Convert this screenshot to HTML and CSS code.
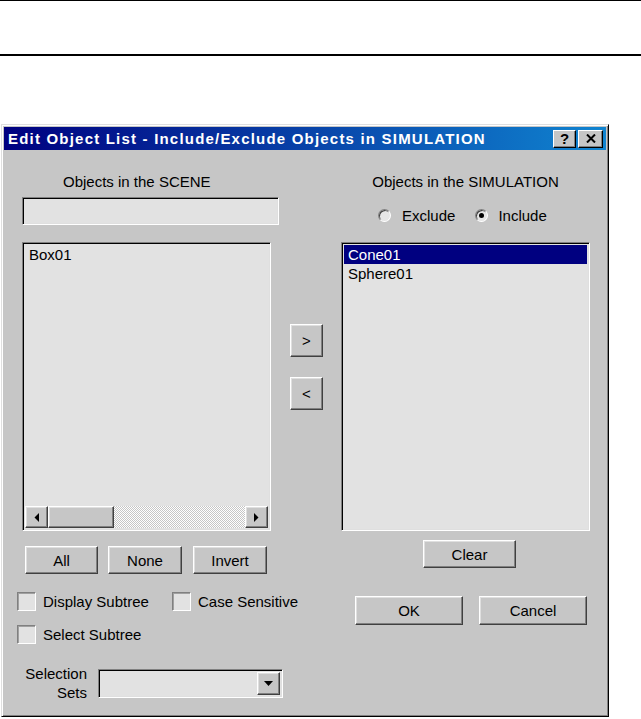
FILE: index.html
```html
<!DOCTYPE html>
<html lang="en">
<head>
    <meta name="viewport" content="width=device-width, initial-scale=1.0">
    <title>Edit Object List</title>
    <link rel="stylesheet" href="styles.css">
</head>
<body>
    <div class="page-head"></div>
    <div class="dialog">
        <div class="title-bar">
            <span class="title">Edit Object List - Include/Exclude Objects in SIMULATION</span>
            <div class="title-buttons">
                <span class="tb-btn tb-help">?</span>
                <span class="tb-btn">
                    <svg width="10" height="9" viewBox="0 0 10 9"><path d="M1 0.5 L9 8.5 M9 0.5 L1 8.5" stroke="#000" stroke-width="2" fill="none"/></svg>
                </span>
            </div>
        </div>
        <div class="dialog-body">
            <div class="col-left">
                <div class="label scene-label">Objects in the SCENE</div>
                <div class="sunken search"></div>
                <div class="sunken list list-left">
                    <div class="items">
                        <div class="item">Box01</div>
                    </div>
                    <div class="hscroll">
                        <span class="raised sb-btn">
                            <svg width="5" height="9" viewBox="0 0 5 9"><polygon points="5,0 5,9 0.5,4.5" fill="#000"/></svg>
                        </span>
                        <span class="raised sb-thumb"></span>
                        <span class="sb-track"></span>
                        <span class="raised sb-btn">
                            <svg width="5" height="9" viewBox="0 0 5 9"><polygon points="0,0 0,9 4.5,4.5" fill="#000"/></svg>
                        </span>
                    </div>
                </div>
                <div class="btn-row">
                    <button class="raised btn btn-all">All</button>
                    <button class="raised btn btn-none">None</button>
                    <button class="raised btn btn-invert">Invert</button>
                </div>
                <div class="check-row">
                    <label class="check check-first"><span class="box"></span>Display Subtree</label>
                    <label class="check"><span class="box"></span>Case Sensitive</label>
                </div>
                <div class="check-row check-row-2">
                    <label class="check"><span class="box"></span>Select Subtree</label>
                </div>
                <div class="sets-row">
                    <div class="sets-label">Selection<br>Sets</div>
                    <div class="sunken dropdown">
                        <span class="raised dd-btn">
                            <svg width="9" height="5" viewBox="0 0 9 5"><polygon points="0,0 9,0 4.5,5" fill="#000"/></svg>
                        </span>
                    </div>
                </div>
            </div>

            <div class="col-mid">
                <button class="raised btn arrow-btn">&gt;</button>
                <button class="raised btn arrow-btn arrow-back">&lt;</button>
            </div>

            <div class="col-right">
                <div class="label sim-label">Objects in the SIMULATION</div>
                <div class="radio-row">
                    <span class="radio"></span><span class="radio-text">Exclude</span>
                    <span class="radio checked"></span><span class="radio-text radio-text-2">Include</span>
                </div>
                <div class="sunken list list-right">
                    <div class="items">
                        <div class="item selected">Cone01</div>
                        <div class="item">Sphere01</div>
                    </div>
                </div>
                <button class="raised btn btn-clear">Clear</button>
                <div class="ok-row">
                    <button class="raised btn btn-ok">OK</button>
                    <button class="raised btn btn-cancel">Cancel</button>
                </div>
            </div>
        </div>
    </div>
</body>
</html>
```

FILE: styles.css
```css
body {
    margin: 0;
    background: #fff;
    font-family: "Liberation Sans", Arial, sans-serif;
    font-size: 15px;
    color: #000;
}
.page-head {
    height: 53px;
    border-top: 1px solid #000;
    border-bottom: 2px solid #000;
}
.dialog {
    box-sizing: border-box;
    width: 608px;
    height: 593px;
    margin: 68px 0 0 1px;
    padding: 2px;
    background: #c6c6c6;
    border: 1px solid;
    border-color: #dfdfdf #000 #000 #dfdfdf;
    box-shadow: inset 1px 1px #fff, inset -1px -1px #808080;
}
.title-bar {
    height: 23px;
    display: flex;
    align-items: center;
    justify-content: space-between;
    padding: 0 3px 0 4px;
    background: linear-gradient(to right, #000080, #1084d0);
}
.title {
    color: #fff;
    font-weight: bold;
    letter-spacing: 1.2px;
    white-space: nowrap;
}
.title-buttons {
    display: flex;
    gap: 2px;
}
.tb-btn {
    box-sizing: border-box;
    width: 25px;
    height: 18px;
    display: flex;
    align-items: center;
    justify-content: center;
    background: #c6c6c6;
    border: 1px solid;
    border-color: #fff #000 #000 #fff;
    box-shadow: inset -1px -1px #808080;
    font-weight: bold;
    font-size: 15px;
}
.tb-help {
    width: 23px;
}

/* 3d borders */
.sunken {
    box-sizing: border-box;
    background: #e2e2e2;
    border: 1px solid;
    border-color: #808080 #fff #fff #808080;
    box-shadow: inset 1px 1px #000, inset -1px -1px #dfdfdf;
}
.raised {
    box-sizing: border-box;
    background: #c6c6c6;
    border: 1px solid;
    border-color: #fff #404040 #404040 #fff;
    box-shadow: inset -1px -1px #808080, inset 1px 1px #dfdfdf;
}
.btn {
    font-family: inherit;
    font-size: 15px;
    color: #000;
    padding: 0;
    height: 28px;
}

.dialog-body {
    display: flex;
    padding: 23px 0 0 13px;
}
.col-left {
    width: 266px;
    flex: none;
}
.col-mid {
    width: 33px;
    flex: none;
    margin-left: 7px;
    padding-top: 151px;
    display: flex;
    flex-direction: column;
}
.col-right {
    width: 249px;
    flex: none;
    margin-left: 18px;
}
.label {
    line-height: 18px;
    height: 18px;
    white-space: nowrap;
}
.scene-label {
    padding-left: 46px;
}
.sim-label {
    text-align: center;
}
.search {
    margin: 6px 0 0 5px;
    width: 257px;
    height: 28px;
}
.list {
    width: 249px;
    height: 289px;
    padding: 2px;
    display: flex;
    flex-direction: column;
}
.list-left {
    margin: 17px 0 0 5px;
}
.items {
    flex: 1;
}
.item {
    height: 19px;
    line-height: 19px;
    padding-left: 4px;
}
.item.selected {
    background: #000080;
    color: #fff;
}
.hscroll {
    height: 22px;
    display: flex;
}
.sb-btn {
    width: 23px;
    display: flex;
    align-items: center;
    justify-content: center;
}
.sb-thumb {
    width: 66px;
}
.sb-track {
    flex: 1;
    background: repeating-conic-gradient(#fff 0 25%, #c6c6c6 0 50%) 0 0 / 2px 2px;
}
.btn-row {
    display: flex;
    margin: 15px 0 0 8px;
}
.btn-all {
    width: 73px;
}
.btn-none {
    width: 74px;
    margin-left: 10px;
}
.btn-invert {
    width: 74px;
    margin-left: 11px;
}
.check-row {
    display: flex;
    margin-top: 18px;
    height: 19px;
}
.check-row-2 {
    margin-top: 14px;
}
.check {
    flex: none;
    display: flex;
    align-items: center;
    white-space: nowrap;
}
.check-first {
    width: 155px;
}
.box {
    box-sizing: border-box;
    flex: none;
    width: 19px;
    height: 19px;
    margin-right: 7px;
    background: #e2e2e2;
    border: 1px solid;
    border-color: #808080 #fff #fff #808080;
    box-shadow: inset 1px 1px #a0a0a0;
}
.sets-row {
    display: flex;
    align-items: center;
    margin-top: 20px;
}
.sets-label {
    width: 70px;
    text-align: right;
    line-height: 19px;
}
.dropdown {
    width: 185px;
    height: 29px;
    margin-left: 11px;
    display: flex;
    justify-content: flex-end;
    padding: 2px;
}
.dd-btn {
    width: 23px;
    display: flex;
    align-items: center;
    justify-content: center;
}
.arrow-btn {
    width: 33px;
    height: 33px;
}
.arrow-back {
    margin-top: 20px;
}
.radio-row {
    display: flex;
    align-items: center;
    height: 18px;
    margin-top: 15px;
    padding-left: 37px;
}
.radio {
    box-sizing: border-box;
    width: 13px;
    height: 13px;
    border-radius: 50%;
    background: #e6e6e6;
    border: 1px solid;
    border-color: #808080 #fff #fff #808080;
    box-shadow: inset 1px 1px #404040;
    display: flex;
    align-items: center;
    justify-content: center;
}
.radio.checked::after {
    content: "";
    width: 5px;
    height: 5px;
    border-radius: 50%;
    background: #000;
}
.radio-text {
    margin: 0 20px 0 11px;
}
.radio-text-2 {
    margin-left: 10px;
}
.list-right {
    margin-top: 18px;
}
.btn-clear {
    display: block;
    width: 93px;
    margin: 9px 0 0 82px;
}
.ok-row {
    display: flex;
    margin: 28px 0 0 14px;
}
.btn-ok,
.btn-cancel {
    width: 108px;
    height: 29px;
}
.btn-cancel {
    margin-left: 16px;
}
```
